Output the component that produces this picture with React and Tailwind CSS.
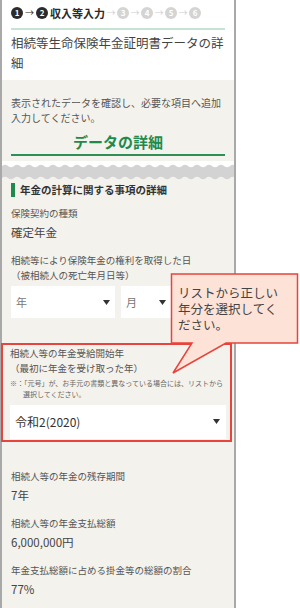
const label = 'text-[9.5px] leading-[15px] text-[#555]'
const value = 'text-[11.5px] leading-[18px] text-[#444]'

function wavePath(base, amp, period, width) {
  let d = `M0 ${base}`
  for (let x = 0; x < width; x += period) {
    d += ` Q${x + period / 4} ${base - amp} ${x + period / 2} ${base} T${x + period} ${base}`
  }
  return d
}

function TornEdge() {
  const w = 240
  const top = wavePath(5, 2.5, 12, w)
  const bottom = wavePath(17, 2.5, 12, w)
  return (
    <svg width="232" height="22" viewBox="0 0 232 22" className="block">
      <rect width="232" height="22" fill="#ffffff" />
      <path d={`${top} L${w} 22 L0 22 Z`} fill="#d3d3d3" />
      <path d={`${bottom} L${w} 22 L0 22 Z`} fill="#f4f2ec" />
    </svg>
  )
}

function Dot({ n, active }) {
  return (
    <span
      className={
        active
          ? 'w-[12px] h-[12px] rounded-full bg-[#2b2b2b] text-white text-[8px] font-bold leading-none flex items-center justify-center'
          : 'w-[12px] h-[12px] rounded-full bg-[#d4d4d4] text-white text-[8px] font-bold leading-none flex items-center justify-center'
      }
    >
      {n}
    </span>
  )
}

function Arrow({ active }) {
  return (
    <span className={active ? 'w-[13px] text-center text-[9px] text-[#2b2b2b]' : 'w-[12px] text-center text-[9px] text-[#cfcfcf]'}>
      →
    </span>
  )
}

function Caret() {
  return (
    <svg width="7" height="5" viewBox="0 0 7 5">
      <path d="M0 0 H7 L3.5 5 Z" fill="#333" />
    </svg>
  )
}

function Field({ title, children, className }) {
  return (
    <div className={className}>
      <div className={label}>{title}</div>
      <div className={`mt-[2px] ${value}`}>{children}</div>
    </div>
  )
}

export default function App() {
  return (
    <div className="w-[300px] h-[608px] bg-white relative overflow-hidden font-['Noto_Sans_CJK_JP',sans-serif]">
      <div className="w-[236px] border-x-2 border-b-2 border-[#a9a9a9]">
        {/* header */}
        <div className="bg-white px-[9px] pt-[5px] pb-[7px]">
          <div className="h-[16px] flex items-center">
            <Dot n="1" active />
            <Arrow active />
            <Dot n="2" active />
            <span className="ml-[2px] text-[11px] font-bold text-[#2b2b2b] leading-none">収入等入力</span>
            <Arrow />
            <Dot n="3" />
            <Arrow />
            <Dot n="4" />
            <Arrow />
            <Dot n="5" />
            <Arrow />
            <Dot n="6" />
          </div>
          <div className="mt-[7px] h-[2px] bg-[#c6e4d3]" />
          <h1 className="mt-[3px] text-[12.5px] leading-[20px] text-[#444]">
            相続等生命保険年金証明書データの詳細
          </h1>
        </div>

        {/* intro */}
        <div className="bg-[#f4f2ec] px-[9px] pt-[15px] pb-[5px]">
          <p className="text-[10px] leading-[15px] text-[#555]">
            表示されたデータを確認し、必要な項目へ追加入力してください。
          </p>
          <h2 className="mt-[7px] text-center text-[15px] leading-[20px] font-bold text-[#1f8a4c]">データの詳細</h2>
          <div className="mt-[2px] h-[2px] bg-[#2f8f57]" />
        </div>

        <TornEdge />

        {/* details */}
        <div className="bg-[#f4f2ec] pb-[14px]">
          <div className="px-[9px]">
            <div className="h-[14px] flex items-center gap-[5px]">
              <span className="w-[4px] h-[14px] bg-[#1f8a4c]" />
              <span className="text-[10.5px] font-bold text-[#333] leading-none">年金の計算に関する事項の詳細</span>
            </div>

            <Field title="保険契約の種類" className="mt-[9px]">確定年金</Field>

            <div className="mt-[12px]">
              <div className={label}>
                相続等により保険年金の権利を取得した日
                <br />
                （被相続人の死亡年月日等）
              </div>
              <div className="mt-[3px] flex gap-[6px]">
                <div className="w-[104px] h-[32px] bg-white flex items-center justify-between pl-[5px] pr-[5px]">
                  <span className="text-[11px] text-[#777]">年</span>
                  <Caret />
                </div>
                <div className="w-[50px] h-[32px] bg-white flex items-center justify-between pl-[5px] pr-[5px]">
                  <span className="text-[11px] text-[#777]">月</span>
                  <Caret />
                </div>
              </div>
            </div>
          </div>

          {/* highlighted */}
          <div className="mt-[25px] ml-[-1px] mr-[2px] border-2 border-[#e8433d] pl-[7px] pr-[4px] pt-[1px] pb-[1px]">
            <div className={label}>
              相続人等の年金受給開始年
              <br />
              （最初に年金を受け取った年）
            </div>
            <p className="mt-[2px] text-[7px] leading-[11px] text-[#666] pl-[13px] -indent-[13px]">
              ※：「元号」が、お手元の書類と異なっている場合には、リストから選択してください。
            </p>
            <div className="mt-[4.5px] h-[34px] bg-white flex items-center justify-between pl-[5px] pr-[6px]">
              <span className="text-[12px] text-[#333]">令和2(2020)</span>
              <Caret />
            </div>
          </div>

          <div className="px-[9px]">
            <Field title="相続人等の年金の残存期間" className="mt-[27px]">7年</Field>
            <Field title="相続人等の年金支払総額" className="mt-[12px]">6,000,000円</Field>
            <Field title="年金支払総額に占める掛金等の総額の割合" className="mt-[12px]">77%</Field>
          </div>
        </div>
      </div>

      {/* callout */}
      <div className="absolute left-0 top-0 w-[300px] h-[608px] pointer-events-none">
        <svg width="300" height="608" className="absolute left-0 top-0">
          <path
            d="M171.5 274 H297.5 V343 H226 L173 373 L192 343 H171.5 Z"
            fill="#fde2d7"
            stroke="#e8433d"
            strokeWidth="1.5"
            strokeLinejoin="miter"
          />
        </svg>
        <div className="absolute left-[178px] top-[285px] w-[104px] text-[12.5px] leading-[16px] text-[#444]">
          リストから正しい年分を選択してください。
        </div>
      </div>
    </div>
  )
}
